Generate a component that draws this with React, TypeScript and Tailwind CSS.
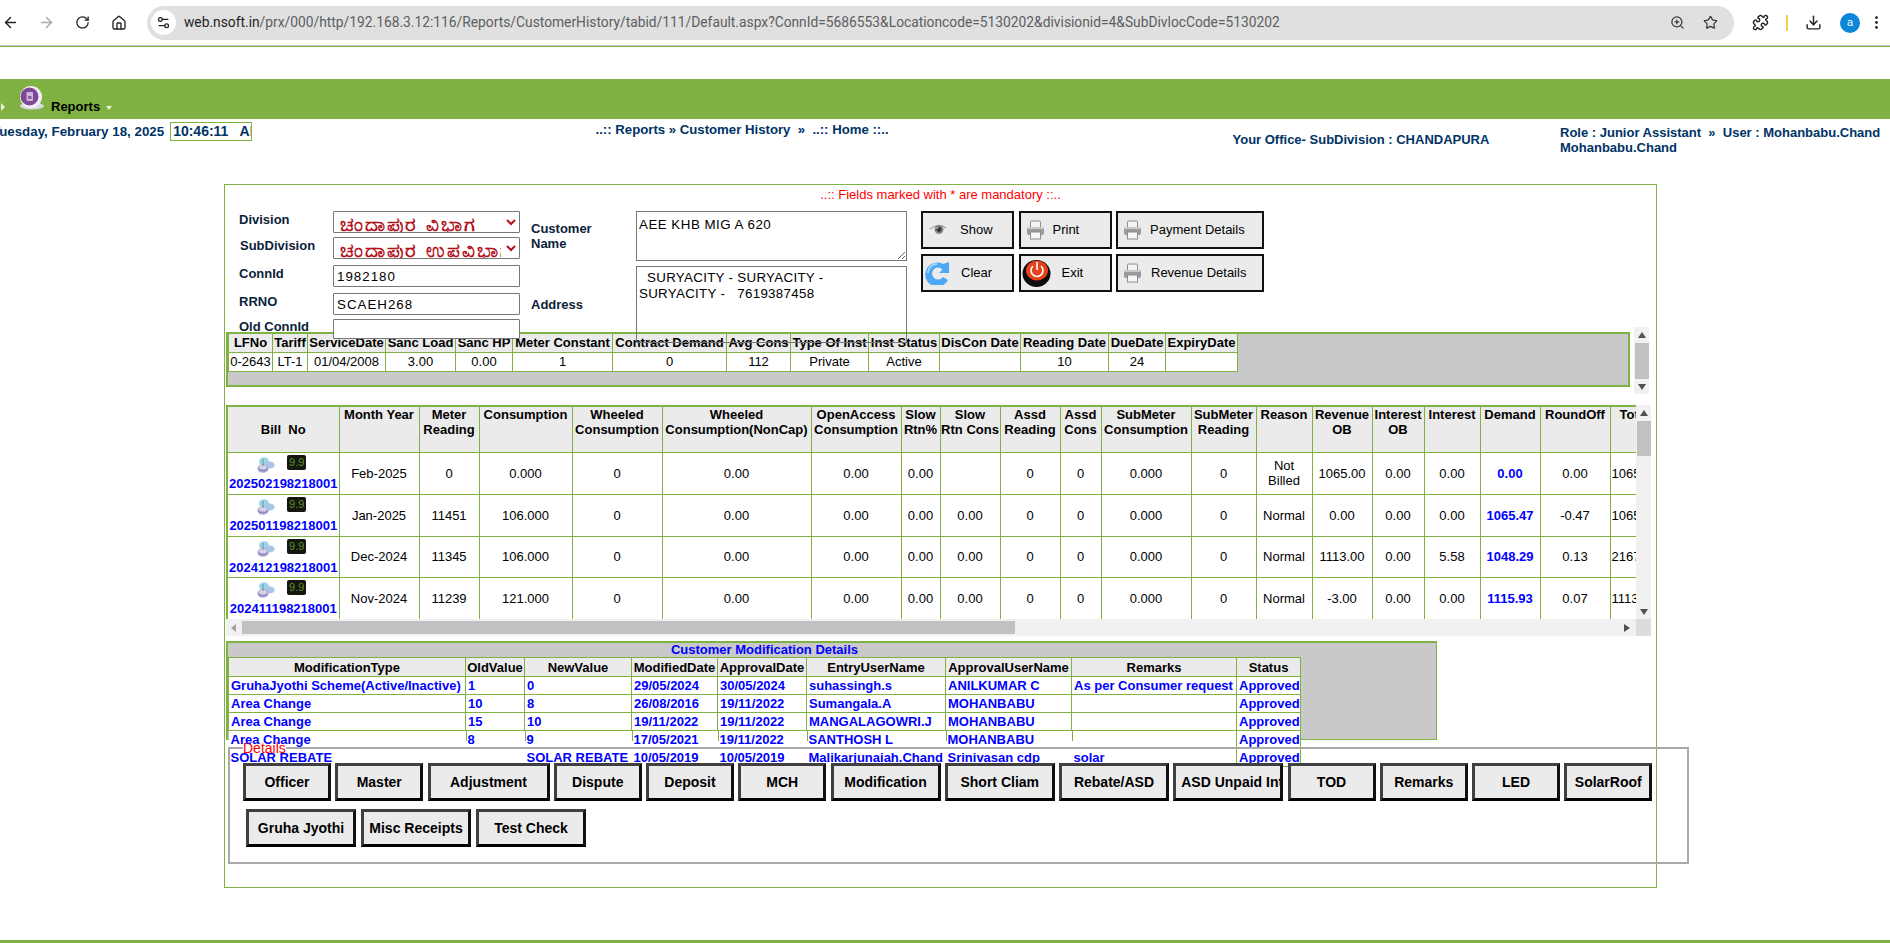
import {
  ArrowLeft,
  ArrowRight,
  Download,
  House,
  MoreVertical,
  Puzzle,
  RotateCw,
  Settings2,
  Star,
  ZoomIn,
} from "lucide-react";
import type { ReactNode } from "react";

const topHeaders = [
  ["LFNo", 44],
  ["Tariff", 35],
  ["ServiceDate", 78],
  ["Sanc Load", 70],
  ["Sanc HP", 57],
  ["Meter Constant", 100],
  ["Contract Demand", 114],
  ["Avg Cons", 64],
  ["Type Of Inst", 78],
  ["Inst Status", 71],
  ["DisCon Date", 81],
  ["Reading Date", 88],
  ["DueDate", 57],
  ["ExpiryDate", 72],
] as const;
const topRow = ["0-2643", "LT-1", "01/04/2008", "3.00", "0.00", "1", "0", "112", "Private", "Active", "", "10", "24", ""];

const billCols = [111, 80, 60, 93, 90, 149, 90, 39, 60, 60, 41, 90, 65, 56, 60, 52, 56, 60, 70, 70];
const billHeaders = [
  "Month Year",
  "Meter\nReading",
  "Consumption",
  "Wheeled\nConsumption",
  "Wheeled\nConsumption(NonCap)",
  "OpenAccess\nConsumption",
  "Slow\nRtn%",
  "Slow\nRtn Cons",
  "Assd\nReading",
  "Assd\nCons",
  "SubMeter\nConsumption",
  "SubMeter\nReading",
  "Reason",
  "Revenue\nOB",
  "Interest\nOB",
  "Interest",
  "Demand",
  "RoundOff",
];
const billRows = [
  {
    no: "202502198218001",
    h: "h-[42px]",
    cells: ["Feb-2025", "0", "0.000", "0", "0.00", "0.00", "0.00", "", "0", "0", "0.000", "0", "Not Billed", "1065.00", "0.00", "0.00", "0.00", "0.00", "1065.00"],
  },
  {
    no: "202501198218001",
    h: "h-[42px]",
    cells: ["Jan-2025", "11451", "106.000", "0", "0.00", "0.00", "0.00", "0.00", "0", "0", "0.000", "0", "Normal", "0.00", "0.00", "0.00", "1065.47", "-0.47", "1065.00"],
  },
  {
    no: "202412198218001",
    h: "h-[41px]",
    cells: ["Dec-2024", "11345", "106.000", "0", "0.00", "0.00", "0.00", "0.00", "0", "0", "0.000", "0", "Normal", "1113.00", "0.00", "5.58", "1048.29", "0.13", "2167.00"],
  },
  {
    no: "202411198218001",
    h: "h-[42px]",
    cells: ["Nov-2024", "11239", "121.000", "0", "0.00", "0.00", "0.00", "0.00", "0", "0", "0.000", "0", "Normal", "-3.00", "0.00", "0.00", "1115.93", "0.07", "1113.00"],
  },
];

const modCols = [237, 59, 107, 86, 89, 139, 126, 165, 64];
const modHeaders = ["ModificationType", "OldValue", "NewValue", "ModifiedDate", "ApprovalDate", "EntryUserName", "ApprovalUserName", "Remarks", "Status"];
const modRows = [
  ["GruhaJyothi Scheme(Active/Inactive)", "1", "0", "29/05/2024", "30/05/2024", "suhassingh.s", "ANILKUMAR C", "As per Consumer request", "Approved"],
  ["Area Change", "10", "8", "26/08/2016", "19/11/2022", "Sumangala.A", "MOHANBABU", "", "Approved"],
  ["Area Change", "15", "10", "19/11/2022", "19/11/2022", "MANGALAGOWRI.J", "MOHANBABU", "", "Approved"],
];
const modCut = ["Area Change", "8", "9", "17/05/2021", "19/11/2022", "SANTHOSH L", "MOHANBABU", "", "Approved"];
const modLast = ["SOLAR REBATE", "", "SOLAR REBATE", "10/05/2019", "10/05/2019", "Malikarjunaiah.Chand", "Srinivasan cdp", "solar", "Approved"];

const actionsOne = [
  ["Officer", "w-[88px]"],
  ["Master", "w-[88px]"],
  ["Adjustment", "w-[122px]"],
  ["Dispute", "w-[88px]"],
  ["Deposit", "w-[88px]"],
  ["MCH", "w-[88px]"],
  ["Modification", "w-[110px]"],
  ["Short Cliam", "w-[110px]"],
  ["Rebate/ASD", "w-[110px]"],
  ["ASD Unpaid Int", "w-[110px]"],
  ["TOD", "w-[88px]"],
  ["Remarks", "w-[88px]"],
  ["LED", "w-[88px]"],
  ["SolarRoof", "w-[88px]"],
];
const actionsTwo = ["Gruha Jyothi", "Misc Receipts", "Test Check"];

function EyeIcon() {
  return (
    <svg width="20" height="17" viewBox="0 0 20 17">
      <path d="M1 7c3-5 13-6 18 0-2 6-6 9-10 9-4 0-7-3-8-9z" fill="#ececec" />
      <path d="M2 7c4-4 11-5 16-1" fill="none" stroke="#9c9c9c" strokeWidth="1.2" />
      <circle cx="11" cy="7.5" r="4.5" fill="#85868a" />
      <circle cx="11" cy="7.5" r="2.4" fill="#33343a" />
      <circle cx="9.5" cy="6" r="0.8" fill="#ddd" />
    </svg>
  );
}

function PrinterIcon() {
  return (
    <svg width="19" height="20" viewBox="0 0 19 20">
      <rect x="4.5" y="1" width="10" height="7" rx="1" fill="#f4f4f4" stroke="#8c8c8c" />
      <rect x="1" y="7" width="17" height="8" rx="2" fill="#9a9a9a" />
      <rect x="1" y="7" width="17" height="2" rx="1" fill="#c9c9c9" />
      <rect x="4.5" y="12" width="10" height="7" fill="#f6f6f6" stroke="#8c8c8c" />
    </svg>
  );
}

function RefreshIcon() {
  return (
    <svg width="24" height="24" viewBox="0 0 24 24">
      <path d="M18 3 L24 1 L24 12 L14 12 L17.5 8.5 A6 6 0 1 0 18 16 L23 19 A12 12 0 1 1 18 3z" fill="#4aa8f4" />
      <path d="M3 12a9 9 0 0 1 9-9" fill="none" stroke="#a5d6fb" strokeWidth="2" />
    </svg>
  );
}

function PowerIcon() {
  return (
    <svg width="29" height="28" viewBox="0 0 29 28">
      <ellipse cx="14.5" cy="14.5" rx="14" ry="13.5" fill="#0c0c0c" />
      <ellipse cx="15" cy="11.5" rx="11" ry="10" fill="#e8421a" />
      <path d="M11 7a6 6 0 1 0 8 0" fill="none" stroke="#fff" strokeWidth="1.6" />
      <path d="M15 3v8" stroke="#fff" strokeWidth="1.6" />
    </svg>
  );
}

function NetworkIcon() {
  return (
    <svg width="18" height="16" viewBox="0 0 18 16" className="mt-[2px]">
      <ellipse cx="7" cy="4.5" rx="5" ry="4.2" fill="#9fd2ee" />
      <ellipse cx="12.5" cy="8" rx="5.2" ry="3.6" fill="#a9c6e6" />
      <ellipse cx="6" cy="11.5" rx="5.6" ry="4.2" fill="#b4aed8" />
      <ellipse cx="6" cy="10" rx="3.6" ry="2" fill="#d6d3ec" />
      <path d="M1 12c2 2.4 7 2.4 10 0" fill="none" stroke="#7f7bb0" strokeWidth="1" />
      <path d="M6 2v7" stroke="#5fa36a" strokeWidth="1" />
    </svg>
  );
}

function MeterIcon() {
  return (
    <span className="flex h-[15px] w-[19px] items-center justify-center rounded-[2px] bg-[#14160f] text-[11px] leading-none text-[#5d8f2a]">
      9.9
    </span>
  );
}

function ReportsOrb() {
  return (
    <svg width="26" height="24" viewBox="0 0 26 24">
      <ellipse cx="13" cy="20" rx="12" ry="3.5" fill="#ddd6e4" />
      <circle cx="12" cy="11" r="11" fill="#f3eef5" />
      <circle cx="10.5" cy="10.5" r="9" fill="#7d4796" />
      <rect x="7.5" y="6" width="6.5" height="9" rx="1" fill="#cdb6d8" />
      <rect x="9" y="10" width="3.5" height="3" fill="#8d5aa5" />
    </svg>
  );
}

function FormButton({ icon, label, className }: { icon: ReactNode; label: string; className: string }) {
  return (
    <button className={`flex h-[38px] items-center border-2 border-[#111] bg-[#ebebeb] text-[13px] text-black ${className}`}>
      {icon}
      <span>{label}</span>
    </button>
  );
}

function ActionButton({ label, className }: { label: string; className: string }) {
  return (
    <button className={`h-[38px] shrink-0 overflow-hidden whitespace-nowrap border-[3px] border-t-[#404040] border-l-[#404040] border-r-[#111] border-b-[#000] bg-[#ebebeb] px-[5px] text-center text-[14px] font-bold text-black ${className}`}>
      {label}
    </button>
  );
}

function Arrow({ dir }: { dir: "up" | "down" | "left" | "right" }) {
  const points = { up: "4,1 8,7 0,7", down: "0,1 8,1 4,7", left: "6,0 6,8 1,4", right: "1,0 1,8 7,4" }[dir];
  return (
    <svg width="8" height="8" viewBox="0 0 8 8" className="shrink-0">
      <polygon points={points} fill={dir === "left" ? "#a3a3a3" : "#505050"} />
    </svg>
  );
}

function VScroll({ className, thumb }: { className: string; thumb: string }) {
  return (
    <div className={`flex w-[15px] shrink-0 flex-col items-center bg-[#f1f1f1] ${className}`}>
      <div className="flex h-[16px] items-center">
        <Arrow dir="up" />
      </div>
      <div className={`w-[14px] bg-[#c1c1c1] ${thumb}`} />
      <div className="flex-1" />
      <div className="flex h-[15px] items-center">
        <Arrow dir="down" />
      </div>
    </div>
  );
}

export default function App() {
  const label = "text-[13px] font-bold leading-[15px] text-[#0b2239]";
  const field = "h-[22px] w-[187px] rounded-[1px] border border-[#767676] bg-white";
  const inputText = "px-[3px] text-[13.33px] tracking-[1px] text-black outline-none";
  const selectText = "px-[2px] text-[20px] font-bold leading-[20px] tracking-[2px] text-[#b3121d] outline-none";

  return (
    <div className="h-[943px] w-[1890px] overflow-hidden bg-white font-['Liberation_Sans',Arial,sans-serif] text-black">
      {/* browser toolbar */}
      <div className="flex h-[45px] items-center text-[#222]">
        <ArrowLeft size={17} className="ml-[2px]" />
        <ArrowRight size={17} className="ml-[19px] text-[#a8a8a8]" />
        <RotateCw size={15} className="ml-[20px]" />
        <House size={16} className="ml-[21px]" />
        <div className="ml-[20px] flex h-[34px] w-[1587px] items-center rounded-full bg-[#e0e0e0]">
          <span className="ml-[4px] flex h-[25px] w-[25px] items-center justify-center rounded-full bg-white">
            <Settings2 size={15} />
          </span>
          <span className="ml-[8px] w-[1440px] whitespace-nowrap font-['Roboto',sans-serif] text-[13.8px] text-[#5b5e62]">
            <span className="text-[#1f1f1f]">web.nsoft.in</span>
            /prx/000/http/192.168.3.12:116/Reports/CustomerHistory/tabid/111/Default.aspx?ConnId=5686553&amp;Locationcode=5130202&amp;divisionid=4&amp;SubDivlocCode=5130202
          </span>
          <ZoomIn size={15} className="ml-[46px] shrink-0 text-[#3a3a3a]" />
          <Star size={15} className="ml-[18px] shrink-0 text-[#3a3a3a]" />
        </div>
        <Puzzle size={17} className="ml-[18px] text-[#222]" />
        <div className="ml-[17px] h-[16px] w-[2px] bg-[#f5cf4d]" />
        <Download size={17} className="ml-[17px] text-[#222]" />
        <span className="ml-[18px] flex h-[20px] w-[20px] items-center justify-center rounded-full bg-[#0b86d8] text-[11px] text-white">a</span>
        <MoreVertical size={17} className="ml-[8px] shrink-0" />
      </div>
      <div className="h-px bg-[#c8c8c8]" />
      <div className="h-px bg-[#7fb143]" />

      {/* menu bar */}
      <div className="mt-[32px] flex h-[40px] items-start bg-[#7fb143]">
        <svg width="4" height="8" viewBox="0 0 4 8" className="ml-px mt-[24px]">
          <polygon points="0,0 4,4 0,8" fill="#e8f1dc" />
        </svg>
        <div className="ml-[14px] mt-[7px]">
          <ReportsOrb />
        </div>
        <span className="ml-[6px] mt-[20px] text-[13px] font-bold leading-[16px]">Reports</span>
        <svg width="6" height="4" viewBox="0 0 6 4" className="ml-[6px] mt-[27px]">
          <polygon points="0,0 6,0 3,4" fill="#e8f1dc" />
        </svg>
      </div>

      {/* status line */}
      <div className="grid h-[65px] grid-cols-[595.5px_637px_327.5px_330px] text-[13px] font-bold text-[#003366]">
        <div className="flex items-start">
          <span className="-ml-[8px] mt-[3px] whitespace-nowrap text-[13.33px] leading-[19px]">Tuesday, February 18, 2025</span>
          <span className="ml-[6px] mt-[3px] h-[19px] w-[82px] shrink-0 overflow-hidden whitespace-pre border border-[#7fb143] pl-[2px] text-[14px] leading-[17px]">10:46:11   AM</span>
        </div>
        <div className="mt-[3px] whitespace-pre text-[13.2px] leading-[16px]">..:: Reports » Customer History  »  ..:: Home ::..</div>
        <div className="mt-[13px] leading-[16px]">Your Office- SubDivision : CHANDAPURA</div>
        <div className="mt-[6px] leading-[15px]">
          <div className="whitespace-pre">Role : Junior Assistant  »  User : Mohanbabu.Chand</div>
          <div>Mohanbabu.Chand</div>
        </div>
      </div>

      {/* main box */}
      <div className="ml-[224px] h-[704px] w-[1433px] border border-[#7fb143]">
        <div className="h-[26px] pt-[2px] text-center text-[13px] leading-[16px] text-[#ff0000]">..:: Fields marked with * are mandatory ::..</div>

        <div className="relative z-10 flex h-[121px] pl-[14px]">
          <div className="w-[281px] shrink-0">
            <div className="flex items-center">
              <span className={`w-[94px] pb-[6px] ${label}`}>Division</span>
              <select className={`${field} ${selectText}`} defaultValue="a">
                <option value="a">ಚಂದಾಪುರ ವಿಭಾಗ</option>
              </select>
            </div>
            <div className="mt-[4px] flex items-center">
              <span className={`w-[94px] pb-[6px] pl-px ${label}`}>SubDivision</span>
              <select className={`${field} ${selectText}`} defaultValue="a">
                <option value="a">ಚಂದಾಪುರ ಉಪವಿಭಾಗ</option>
              </select>
            </div>
            <div className="mt-[6px] flex items-center">
              <span className={`w-[94px] pb-[6px] ${label}`}>ConnId</span>
              <input readOnly value="1982180" className={`${field} ${inputText}`} />
            </div>
            <div className="mt-[6px] flex items-center">
              <span className={`w-[94px] pb-[6px] ${label}`}>RRNO</span>
              <input readOnly value="SCAEH268" className={`${field} ${inputText}`} />
            </div>
            <div className="mt-[4px] flex items-start">
              <span className={`mt-0 w-[94px] ${label}`}>Old ConnId</span>
              <input readOnly value="" className={`${field} ${inputText} !h-[20px]`} />
            </div>
          </div>

          <div className={`ml-[11px] w-[105px] shrink-0 ${label}`}>
            <div className="mt-[10px]">
              Customer
              <br />
              Name
            </div>
            <div className="mt-[46px]">Address</div>
          </div>

          <div className="w-[271px] shrink-0">
            <textarea readOnly value="AEE KHB MIG A 620" className="block h-[50px] w-[271px] border border-[#767676] bg-white px-[2px] pt-[5px] text-[13.33px] leading-[16px] tracking-[0.5px] outline-none" />
            <textarea readOnly value={"  SURYACITY - SURYACITY -\nSURYACITY -   7619387458"} className="mt-[5px] block h-[77px] w-[271px] resize-none border border-[#767676] bg-transparent px-[2px] pt-[3px] text-[13.33px] leading-[16px] tracking-[0.3px] outline-none" />
          </div>

          <div className="ml-[14px] flex flex-col gap-[5px]">
            <div className="flex gap-[4.5px]">
              <FormButton icon={<EyeIcon />} label="Show" className="w-[93px] gap-[12px] pl-[5px]" />
              <FormButton icon={<PrinterIcon />} label="Print" className="w-[93px] gap-[8px] pl-[5px]" />
              <FormButton icon={<PrinterIcon />} label="Payment Details" className="w-[148px] gap-[8px] pl-[5px]" />
            </div>
            <div className="flex gap-[4.5px]">
              <FormButton icon={<RefreshIcon />} label="Clear" className="w-[93px] gap-[12px] pl-[2px]" />
              <FormButton icon={<PowerIcon />} label="Exit" className="w-[93px] gap-[11px] pl-px" />
              <FormButton icon={<PrinterIcon />} label="Revenue Details" className="w-[148px] gap-[9px] pl-[5px]" />
            </div>
          </div>
        </div>

        {/* connection table */}
        <div className="flex h-[55px] items-start pl-px">
          <div className="h-[55px] w-[1404px] shrink-0 border-2 border-[#7fb143] bg-[#c9c9c9]">
            <table className="w-[1009px] table-fixed border-collapse text-[13px] leading-[15px]">
              <colgroup>
                {topHeaders.map(([name, width]) => (
                  <col key={name} style={{ width }} />
                ))}
              </colgroup>
              <thead>
                <tr className="h-[18px] bg-[#ebebeb] font-bold">
                  {topHeaders.map(([name]) => (
                    <th key={name} className="overflow-hidden whitespace-nowrap border border-[#7fb143] border-t-0 p-0 text-center font-bold">
                      {name}
                    </th>
                  ))}
                </tr>
              </thead>
              <tbody>
                <tr className="h-[19px] bg-white">
                  {topRow.map((value, i) => (
                    <td key={i} className="border border-[#7fb143] p-0 text-center">
                      {value}
                    </td>
                  ))}
                </tr>
              </tbody>
            </table>
          </div>
          <VScroll className="ml-[4px] -mt-[5px] h-[67px]" thumb="h-[37px]" />
        </div>

        {/* bill history */}
        <div className="mt-[18px] h-[231px] w-[1426px] pl-px">
          <div className="flex h-[214px]">
            <div className="h-[214px] w-[1410px] shrink-0 overflow-hidden border-l-2 border-t-2 border-[#7fb143]">
              <table className="w-[1452px] table-fixed border-collapse text-[13px] leading-[15px]">
                <colgroup>
                  {billCols.map((width, i) => (
                    <col key={i} style={{ width }} />
                  ))}
                </colgroup>
                <thead>
                  <tr className="h-[45px] bg-[#ebebeb]">
                    <th className="whitespace-pre border border-[#7fb143] border-l-0 border-t-0 p-0 text-center align-middle font-bold">Bill  No</th>
                    {billHeaders.map((name) => (
                      <th key={name} className="whitespace-pre-line border border-[#7fb143] border-t-0 p-0 text-center align-top font-bold">
                        {name}
                      </th>
                    ))}
                    <th className="border border-[#7fb143] border-t-0 p-0 pl-[9px] text-left align-top font-bold">Total</th>
                  </tr>
                </thead>
                <tbody>
                  {billRows.map((row) => (
                    <tr key={row.no} className={row.h}>
                      <td className="border border-[#7fb143] border-l-0 p-0 text-center">
                        <div className="flex h-[21px] items-start justify-center gap-[12px] pr-[3px]">
                          <NetworkIcon />
                          <MeterIcon />
                        </div>
                        <div className="font-bold text-[#0000ff]">{row.no}</div>
                      </td>
                      {row.cells.map((value, i) => (
                        <td
                          key={i}
                          className={
                            i === 18
                              ? "overflow-hidden whitespace-nowrap border border-[#7fb143] p-0 pl-px text-left"
                              : i === 16
                                ? "border border-[#7fb143] p-0 text-center font-bold text-[#0000ff]"
                                : "border border-[#7fb143] p-0 text-center"
                          }
                        >
                          {value}
                        </td>
                      ))}
                    </tr>
                  ))}
                </tbody>
              </table>
            </div>
            <VScroll className="h-[214px]" thumb="h-[35px]" />
          </div>
          <div className="flex h-[17px]">
            <div className="flex w-[1410px] shrink-0 items-center bg-[#f1f1f1] pl-[4px]">
              <Arrow dir="left" />
              <div className="ml-[4px] h-[13px] w-[773px] bg-[#c1c1c1]" />
              <div className="flex-1" />
              <Arrow dir="right" />
              <div className="w-[5px]" />
            </div>
            <div className="w-[15px] bg-[#dcdcdc]" />
          </div>
        </div>

        {/* modification details */}
        <div className="ml-px mt-[5px] h-[99px] w-[1211px] border-2 border-b border-r border-[#7fb143] bg-[#c9c9c9]">
          <div className="h-[14px] w-[1073px] text-center text-[13px] font-bold leading-[14px] text-[#0000ff]">Customer Modification Details</div>
          <table className="w-[1073px] table-fixed border-collapse text-[13px] font-bold leading-[15px] text-[#0000ff]">
            <colgroup>
              {modCols.map((width, i) => (
                <col key={i} style={{ width }} />
              ))}
            </colgroup>
            <thead>
              <tr className="h-[19px] bg-[#ebebeb] text-black">
                {modHeaders.map((name) => (
                  <th key={name} className="overflow-hidden whitespace-nowrap border border-[#7fb143] p-0 text-center font-bold">
                    {name}
                  </th>
                ))}
              </tr>
            </thead>
            <tbody>
              {modRows.map((row, r) => (
                <tr key={r} className="h-[18px] bg-white">
                  {row.map((value, i) => (
                    <td key={i} className="overflow-hidden whitespace-nowrap border border-[#7fb143] p-0 pl-[2px] text-left">
                      {value}
                    </td>
                  ))}
                </tr>
              ))}
              <tr className="h-[18px] bg-white">
                {modCut.map((value, i) => (
                  <td key={i} className={`relative whitespace-nowrap p-0 pl-[2px] text-left ${i === 8 ? "border border-t-0 border-[#7fb143]" : ""}`}>
                    {i > 0 && i < 8 && <span className="absolute left-0 top-0 h-[10px] w-px bg-[#7fb143]" />}
                    {value}
                  </td>
                ))}
              </tr>
              <tr className="h-[18px]">
                {modLast.map((value, i) => (
                  <td key={i} className={`whitespace-nowrap p-0 pl-[2px] text-left ${i === 8 ? "border border-t-0 border-[#7fb143]" : ""}`}>
                    {value}
                  </td>
                ))}
              </tr>
            </tbody>
          </table>
        </div>

        {/* details fieldset */}
        <fieldset className="ml-[3px] h-[124px] w-[1461px] border-2 border-[#a9a9a9] pl-[13px]">
          <legend className="text-[14px] leading-[16px] text-[#ff0000]">Details</legend>
          <div className="mt-[7px] flex gap-[4.25px]">
            {actionsOne.map(([name, width]) => (
              <ActionButton key={name} label={name} className={width} />
            ))}
          </div>
          <div className="ml-[3px] mt-[8px] flex gap-[5px]">
            {actionsTwo.map((name) => (
              <ActionButton key={name} label={name} className="w-[110px]" />
            ))}
          </div>
        </fieldset>
      </div>

      <div className="mt-[52px] h-[3px] bg-[#7fb143]" />
    </div>
  );
}
